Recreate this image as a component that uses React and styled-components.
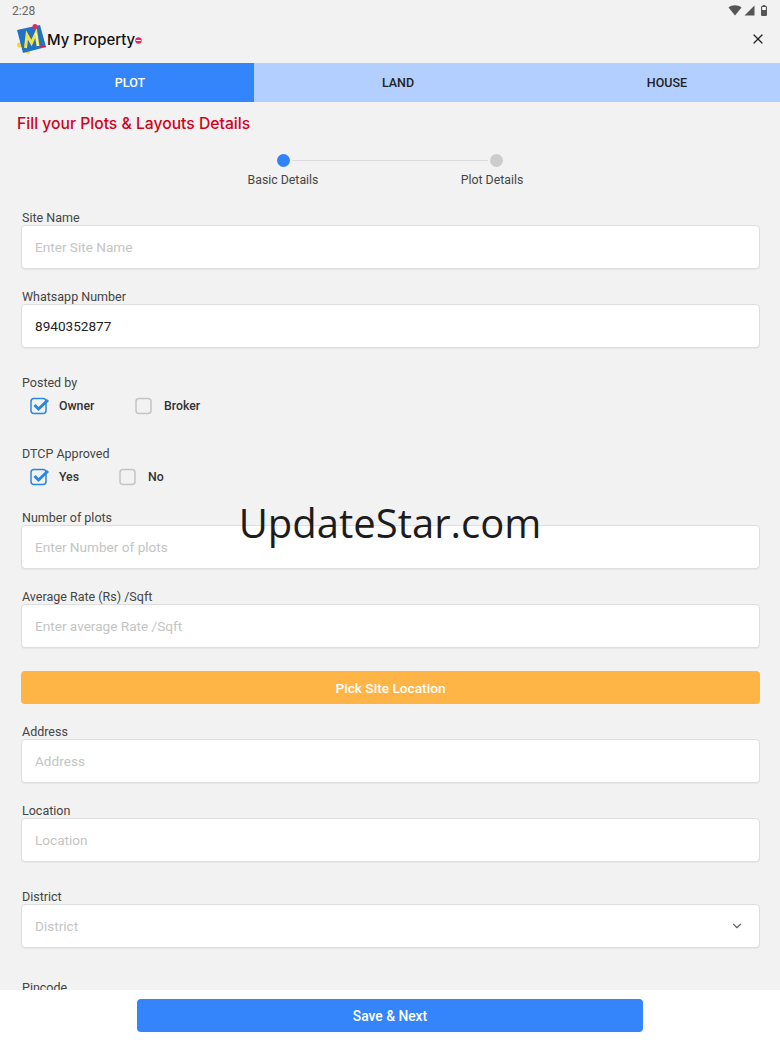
import React from 'react';
import styled, { createGlobalStyle } from 'styled-components';
import { ChevronDown, X } from 'lucide-react';

const GlobalStyle = createGlobalStyle`
  html, body {
    margin: 0;
    padding: 0;
    background: #f2f2f2;
  }
  * {
    box-sizing: border-box;
  }
`;

const Page = styled.div`
  position: relative;
  width: 780px;
  height: 1040px;
  overflow: hidden;
  background: #f2f2f2;
  font-family: Roboto, "Liberation Sans", sans-serif;
  color: #444;
`;

const StatusBar = styled.div`
  display: flex;
  align-items: center;
  justify-content: space-between;
  height: 21px;
  padding: 0 13px 0 12px;
  font-size: 12px;
  color: #666;
`;

const StatusIcons = styled.div`
  display: flex;
  align-items: center;
  gap: 2px;
`;

const Header = styled.div`
  display: flex;
  align-items: center;
  justify-content: space-between;
  height: 42px;
  padding: 0 14px 6px 17px;
`;

const Brand = styled.div`
  display: flex;
  align-items: center;
`;

const BrandName = styled.span`
  font-family: Inter, sans-serif;
  font-size: 14.9px;
  font-weight: 500;
  color: #111;
  margin-top: 2px;
`;

const Tabs = styled.div`
  display: grid;
  grid-template-columns: 254px 288px 238px;
  height: 39px;
  background: #b3cfff;
`;

const Tab = styled.div`
  display: flex;
  align-items: center;
  justify-content: center;
  padding: ${p => p.$pad || '0'};
  font-size: 12.5px;
  font-weight: 500;
  color: ${p => (p.$active ? '#fff' : '#222')};
  background: ${p => (p.$active ? '#3485fb' : 'transparent')};
`;

const Title = styled.div`
  font-family: Inter, sans-serif;
  font-size: 15.7px;
  font-weight: 500;
  line-height: 20px;
  color: #d0021b;
  padding: 12px 0 0 17px;
`;

const Stepper = styled.div`
  display: flex;
  justify-content: center;
  margin: 20px 0 0 -1px;
`;

const Step = styled.div`
  display: flex;
  flex-direction: column;
  align-items: center;
  width: 76px;
  gap: 6px;
  font-size: 12.3px;
  line-height: 14px;
  color: #444;
  white-space: nowrap;
`;

const StepName = styled.span`
  margin-left: ${p => p.$shift || '0'};
`;

const Dot = styled.span`
  width: 13px;
  height: 13px;
  border-radius: 50%;
  background: ${p => (p.$on ? '#2f83fb' : '#cccccc')};
`;

const StepLine = styled.div`
  width: 196px;
  height: 1px;
  margin: 6px -29.5px 0;
  background: #dcdcdc;
`;

const Form = styled.div`
  padding: 23px 20px 0 21px;
`;

const Field = styled.div`
  margin-bottom: ${p => p.$after || '20px'};
`;

const Label = styled.div`
  font-size: 12.5px;
  line-height: 15px;
  color: #444;
  padding-left: 1px;
`;

const Input = styled.div`
  display: flex;
  align-items: center;
  justify-content: space-between;
  height: 44px;
  padding: 0 15px 0 13px;
  background: #fff;
  border: 1px solid #dedede;
  border-radius: 4px;
  box-shadow: 0 1px 1px rgba(0, 0, 0, 0.05);
  font-size: 13.6px;
  color: ${p => (p.$filled ? '#222' : '#c4c4c4')};
`;

const CheckRow = styled.div`
  display: flex;
  align-items: center;
  height: 26px;
  padding-left: 9px;
  margin-top: 3px;
`;

const CheckItem = styled.div`
  display: flex;
  align-items: center;
  width: ${p => p.$width};
  gap: 9px;
  font-size: 12.3px;
  font-weight: 500;
  color: #333;
`;

const PickButton = styled.div`
  display: flex;
  align-items: center;
  justify-content: center;
  height: 33px;
  margin: 23px 0 20px;
  border-radius: 4px;
  background: #ffb546;
  color: #fff;
  font-size: 13.7px;
  font-weight: 500;
`;

const Footer = styled.div`
  position: absolute;
  left: 0;
  right: 0;
  bottom: 0;
  height: 50px;
  display: flex;
  justify-content: center;
  padding-top: 9px;
  background: #fff;
`;

const SaveButton = styled.div`
  display: flex;
  align-items: center;
  justify-content: center;
  width: 506px;
  height: 33px;
  border-radius: 4px;
  background: #3485fb;
  color: #fff;
  font-size: 13.8px;
  font-weight: 500;
`;

const Watermark = styled.div`
  position: absolute;
  left: 0;
  right: 0;
  top: 495px;
  text-align: center;
  font-family: "Open Sans", sans-serif;
  font-size: 40px;
  line-height: 56px;
  color: #1c1c1c;
`;

const Logo = () => (
  <svg width="30" height="30" viewBox="0 0 30 30">
    <circle cx="2.5" cy="21" r="2.5" fill="#ffd23c" />
    <circle cx="11" cy="28" r="2" fill="#ffd23c" />
    <polygon points="0,6 23,1 29,23 6,29" fill="#1f72c4" />
    <path d="M8.5 24 L10 11 L14.5 19 L19 9 L21 22" fill="none" stroke="#f7e04a" strokeWidth="3" />
    <path d="M19 9 L21 22" fill="none" stroke="#fff7b0" strokeWidth="1.5" />
    <circle cx="18" cy="2.5" r="2.5" fill="#e8275c" />
    <rect x="23" y="22" width="6" height="1.2" fill="#d81e5b" />
  </svg>
);

const Badge = () => (
  <svg width="7" height="7" viewBox="0 0 7 7" style={{ marginTop: 2 }}>
    <circle cx="3.5" cy="3.5" r="3.2" fill="#e8275c" />
    <rect x="1.2" y="3" width="4.6" height="1" fill="#fff" />
  </svg>
);

const Wifi = () => (
  <svg width="14" height="11" viewBox="0 0 14 11">
    <path d="M0.5 2.5 C4 -0.5 10 -0.5 13.5 2.5 L7 10.5 Z" fill="#555" />
  </svg>
);

const Signal = () => (
  <svg width="11" height="11" viewBox="0 0 11 11">
    <polygon points="0.5,10.5 10.5,10.5 10.5,0.5" fill="#555" />
  </svg>
);

const Battery = () => (
  <svg width="6" height="11" viewBox="0 0 6 11" style={{ marginLeft: 4 }}>
    <rect x="1.7" y="0" width="2.6" height="1.5" fill="#555" />
    <rect x="0.6" y="1.5" width="4.8" height="9" rx="0.8" fill="#fff" stroke="#555" strokeWidth="1.2" />
    <rect x="1" y="5" width="4" height="5.5" fill="#555" />
  </svg>
);

const CheckBox = ({ on }) => (
  <svg width="20" height="18" viewBox="0 0 20 18">
    <rect
      x="1"
      y="1.5"
      width="15"
      height="15"
      rx="3"
      fill="none"
      stroke={on ? '#2b86dc' : '#c4c4c4'}
      strokeWidth="1.5"
    />
    {on && (
      <path d="M4.5 8 L8.5 12 L18 3" fill="none" stroke="#2b86dc" strokeWidth="3" />
    )}
  </svg>
);

const TextField = ({ label, value, placeholder, after, icon }) => (
  <Field $after={after}>
    <Label>{label}</Label>
    <Input $filled={!!value}>
      {value || placeholder}
      {icon}
    </Input>
  </Field>
);

const Check = ({ label, on, width }) => (
  <CheckItem $width={width}>
    <CheckBox on={on} />
    {label}
  </CheckItem>
);

export default () => {
  return (
    <Page>
      <GlobalStyle />
      <StatusBar>
        2:28
        <StatusIcons>
          <Wifi />
          <Signal />
          <Battery />
        </StatusIcons>
      </StatusBar>
      <Header>
        <Brand>
          <Logo />
          <BrandName>My Property</BrandName>
          <Badge />
        </Brand>
        <X size={16} color="#222" strokeWidth={1.8} />
      </Header>
      <Tabs>
        <Tab $active $pad="0 0 0 6px">PLOT</Tab>
        <Tab>LAND</Tab>
        <Tab $pad="0 0 0 12px">HOUSE</Tab>
      </Tabs>
      <Title>Fill your Plots &amp; Layouts Details</Title>
      <Stepper>
        <Step>
          <Dot $on />
          <StepName>Basic Details</StepName>
        </Step>
        <StepLine />
        <Step>
          <Dot />
          <StepName $shift="-8px">Plot Details</StepName>
        </Step>
      </Stepper>
      <Form>
        <TextField label="Site Name" placeholder="Enter Site Name" />
        <TextField label="Whatsapp Number" value="8940352877" after="27px" />
        <Label>Posted by</Label>
        <CheckRow>
          <Check label="Owner" on width="105px" />
          <Check label="Broker" width="100px" />
        </CheckRow>
        <Field $after="27px" />
        <Label>DTCP Approved</Label>
        <CheckRow>
          <Check label="Yes" on width="89px" />
          <Check label="No" width="80px" />
        </CheckRow>
        <Field $after="20px" />
        <TextField label="Number of plots" placeholder="Enter Number of plots" />
        <TextField label="Average Rate (Rs) /Sqft" placeholder="Enter average Rate /Sqft" after="0" />
        <PickButton>Pick Site Location</PickButton>
        <TextField label="Address" placeholder="Address" after="20px" />
        <TextField label="Location" placeholder="Location" after="27px" />
        <TextField
          label="District"
          placeholder="District"
          after="32px"
          icon={<ChevronDown size={14} color="#666" />}
        />
        <Label>Pincode</Label>
      </Form>
      <Watermark>UpdateStar.com</Watermark>
      <Footer>
        <SaveButton>Save &amp; Next</SaveButton>
      </Footer>
    </Page>
  );
};
